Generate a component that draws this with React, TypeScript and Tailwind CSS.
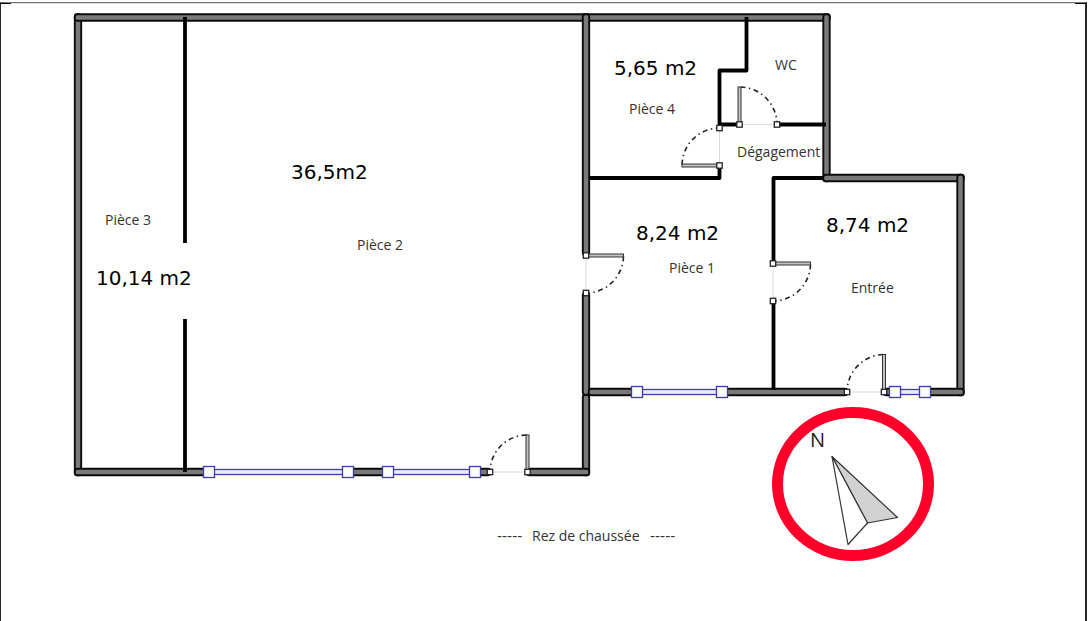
type Point = [number, number];

type WallProps = { from: Point; to: Point };

function Wall({ from: [x1, y1], to: [x2, y2] }: WallProps) {
  return (
    <rect
      x={Math.min(x1, x2) - 3.2}
      y={Math.min(y1, y2) - 3.2}
      width={Math.abs(x2 - x1) + 6.4}
      height={Math.abs(y2 - y1) + 6.4}
      rx={2.5}
      fill="#7a7a7a"
      stroke="#0c0c0c"
      strokeWidth={1.9}
    />
  );
}

type DoorProps = { hinge: Point; tip: Point; latch: Point; sweep: 0 | 1 };

function Door({ hinge, tip, latch, sweep }: DoorProps) {
  const r = Math.hypot(tip[0] - hinge[0], tip[1] - hinge[1]);
  const x = Math.min(hinge[0], tip[0]);
  const y = Math.min(hinge[1], tip[1]);
  const horizontal = hinge[1] === tip[1];
  return (
    <g>
      <line x1={hinge[0]} y1={hinge[1]} x2={latch[0]} y2={latch[1]} stroke="#dcdcdc" />
      <path
        d={`M${tip[0]} ${tip[1]} A${r} ${r} 0 0 ${sweep} ${latch[0]} ${latch[1]}`}
        fill="none"
        stroke="#222"
        strokeWidth={1.6}
        strokeDasharray="5 3.5 1.5 3.5"
        strokeDashoffset={-1}
      />
      <rect
        x={horizontal ? x : x - 1.5}
        y={horizontal ? y - 1.5 : y}
        width={horizontal ? r : 3}
        height={horizontal ? 3 : r}
        fill="#c4c4c4"
        stroke="#333"
      />
      {[hinge, latch].map(([px, py]) => (
        <rect key={`${px}-${py}`} x={px - 2.7} y={py - 2.7} width={5.4} height={5.4} fill="#fff" stroke="#222" strokeWidth={1.3} />
      ))}
    </g>
  );
}

function WindowBay({ x1, x2, y }: { x1: number; x2: number; y: number }) {
  return (
    <g stroke="#3f3ba8" strokeWidth={1.3}>
      <rect x={x1} y={y - 5} width={x2 - x1} height={10} fill="#fff" stroke="none" />
      <rect x={x1} y={y - 2.5} width={x2 - x1} height={5} fill="#ebebfd" />
      <rect x={x1 - 5.5} y={y - 5.5} width={11} height={11} fill="#fcfcff" />
      <rect x={x2 - 5.5} y={y - 5.5} width={11} height={11} fill="#fcfcff" />
    </g>
  );
}

const walls: WallProps[] = [
  { from: [78, 17.5], to: [78, 472] },
  { from: [78, 17.5], to: [586, 17.5] },
  { from: [586, 17.5], to: [826.5, 17.5] },
  { from: [586, 17.5], to: [586, 252] },
  { from: [586, 398], to: [586, 472] },
  { from: [586, 296], to: [586, 391.5] },
  { from: [826.5, 17.5], to: [826.5, 178] },
  { from: [826.5, 178], to: [960.5, 178] },
  { from: [960.5, 178], to: [960.5, 392] },
  { from: [592, 392], to: [844, 392] },
  { from: [887, 392], to: [960.5, 392] },
  { from: [78, 472], to: [487, 472] },
  { from: [530, 472], to: [586, 472] },
];

const partitions = [
  "M185 17V243",
  "M185 319V472",
  "M746.5 17V70.5H719.5V124.5H737",
  "M780 124.5H826",
  "M719.5 168V178H589",
  "M824 178H773.5V261",
  "M773.5 304V390",
];

const doors: DoorProps[] = [
  { hinge: [739.5, 124.5], tip: [739.5, 87], latch: [777, 124.5], sweep: 1 },
  { hinge: [719.5, 165.5], tip: [682, 165.5], latch: [719.5, 128], sweep: 1 },
  { hinge: [586, 255.5], tip: [623.5, 255.5], latch: [586, 293], sweep: 1 },
  { hinge: [773, 263.5], tip: [810.5, 263.5], latch: [773, 301], sweep: 1 },
  { hinge: [884, 392], tip: [884, 354.5], latch: [847, 392], sweep: 0 },
  { hinge: [527.5, 472], tip: [527.5, 435], latch: [490, 472], sweep: 0 },
];

const windows = [
  { x1: 209, x2: 348, y: 472 },
  { x1: 388, x2: 475, y: 472 },
  { x1: 637, x2: 722, y: 392 },
  { x1: 895, x2: 925, y: 392 },
];

const rooms = [
  { name: "Pièce 3", x: 105, y: 225 },
  { name: "Pièce 2", x: 357, y: 250 },
  { name: "Pièce 4", x: 629, y: 114 },
  { name: "WC", x: 775, y: 70 },
  { name: "Dégagement", x: 737, y: 157 },
  { name: "Pièce 1", x: 669, y: 273 },
  { name: "Entrée", x: 851, y: 293 },
  { name: "Rez de chaussée", x: 532, y: 541 },
];

const areas = [
  { size: "10,14 m2", x: 96, y: 285 },
  { size: "36,5m2", x: 291, y: 179 },
  { size: "5,65 m2", x: 614, y: 75 },
  { size: "8,24 m2", x: 636, y: 240 },
  { size: "8,74 m2", x: 826, y: 232 },
];

function Compass() {
  return (
    <g>
      <ellipse cx={853} cy={484} rx={75.5} ry={71.5} fill="#fff" stroke="#ff002b" strokeWidth={11} />
      <g stroke="#333" strokeWidth={1.2} strokeLinejoin="round">
        <path d="M832 456.5L897.5 517.5L867.5 523Z" fill="#d2d2d2" />
        <path d="M832 456.5L867.5 523L848 544.5Z" fill="#fff" />
      </g>
      <text x={810} y={447} className="fill-[#222] font-['Open_Sans',sans-serif] text-[20px]">
        N
      </text>
    </g>
  );
}

export default function App() {
  return (
    <main className="min-h-screen bg-white pt-[2px] pr-[3px]">
      <div className="border-t border-r-2 border-l border-t-[#777] border-r-[#25272a] border-l-[#25272a]">
        <svg viewBox="1 3 1084 618" className="block h-auto w-full" role="img" aria-label="Rez de chaussée">
          <path d="M1 3.5H1085" stroke="#dcdcdc" />
          <path d="M1 3.5H11M1075 3.5H1085" stroke="#000" />
          {walls.map((wall, i) => (
            <Wall key={i} {...wall} />
          ))}
          {partitions.map((d) => (
            <path key={d} d={d} fill="none" stroke="#000" strokeWidth={3.8} strokeLinejoin="round" />
          ))}
          {windows.map((bay) => (
            <WindowBay key={bay.x1} {...bay} />
          ))}
          {doors.map((door, i) => (
            <Door key={i} {...door} />
          ))}
          {rooms.map(({ name, x, y }) => (
            <text key={name} x={x} y={y} className="fill-[#333] font-['Open_Sans',sans-serif] text-[14px]">
              {name}
            </text>
          ))}
          {[497, 650].map((x) => (
            <text key={x} x={x} y={541} className="fill-[#333] font-['DejaVu_Sans',sans-serif] text-[14px]">
              -----
            </text>
          ))}
          {areas.map(({ size, x, y }) => (
            <text key={size} x={x} y={y} className="fill-black font-['DejaVu_Sans',sans-serif] text-[20px]">
              {size}
            </text>
          ))}
          <Compass />
        </svg>
      </div>
    </main>
  );
}
